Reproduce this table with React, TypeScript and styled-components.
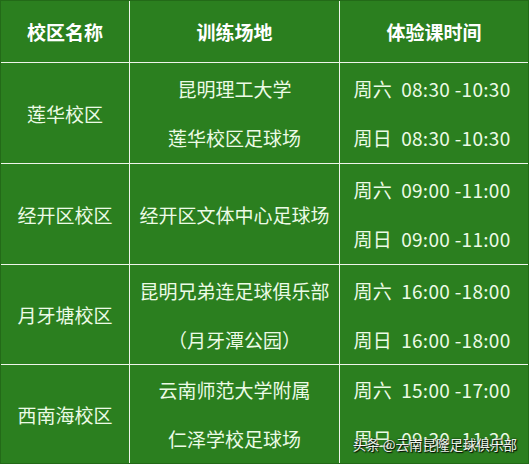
import React from 'react'
import styled, { createGlobalStyle } from 'styled-components'

const GlobalStyle = createGlobalStyle`
  html, body {
    margin: 0;
    padding: 0;
    background: #2b7d1f;
  }
`

const Wrapper = styled.div`
  position: relative;
  width: 529px;
  height: 464px;
  overflow: hidden;
  font-family: 'Noto Sans CJK SC', 'Noto Sans', sans-serif;
`

const Table = styled.div`
  box-sizing: border-box;
  display: grid;
  grid-template-columns: 128px 209px 188px;
  grid-template-rows: 61px 100px 100px 99px 98px;
  gap: 1px;
  width: 529px;
  height: 464px;
  background: #eef5ea;
  border: 1px solid #236a18;
`

const Cell = styled.div<{ $head?: boolean }>`
  background: #2b7f1f;
  color: ${(p) => (p.$head ? '#ffffff' : '#ecfbe6')};
  font-size: 19px;
  font-weight: ${(p) => (p.$head ? 700 : 400)};
  display: flex;
  flex-direction: column;
  align-items: center;
  justify-content: center;
  text-align: center;
  white-space: pre;
`

const Line = styled.div`
  line-height: 49px;
`

const TimeLine = styled(Line)`
  letter-spacing: 0.3px;
  margin-left: -4px;
`

const Watermark = styled.div`
  position: absolute;
  right: 12px;
  bottom: 10px;
  font-size: 13.5px;
  color: #ffffff;
  text-shadow: 0 0 2px #000, 1px 1px 1px #000;
  opacity: 0.9;
  white-space: pre;
`

const rows = [
  { school: '莲华校区', place: ['昆明理工大学', '莲华校区足球场'], time: ['周六  08:30 -10:30', '周日  08:30 -10:30'] },
  { school: '经开区校区', place: ['经开区文体中心足球场'], time: ['周六  09:00 -11:00', '周日  09:00 -11:00'] },
  { school: '月牙塘校区', place: ['昆明兄弟连足球俱乐部', '（月牙潭公园）'], time: ['周六  16:00 -18:00', '周日  16:00 -18:00'] },
  { school: '西南海校区', place: ['云南师范大学附属', '仁泽学校足球场'], time: ['周六  15:00 -17:00', '周日  09:30 -11:30'] },
]

export default function App() {
  return (
    <Wrapper>
      <GlobalStyle />
      <Table>
        <Cell $head>校区名称</Cell>
        <Cell $head>训练场地</Cell>
        <Cell $head>体验课时间</Cell>
        {rows.map((r) => (
          <React.Fragment key={r.school}>
            <Cell>{r.school}</Cell>
            <Cell>
              {r.place.map((p) => (
                <Line key={p}>{p}</Line>
              ))}
            </Cell>
            <Cell>
              {r.time.map((t) => (
                <TimeLine key={t}>{t}</TimeLine>
              ))}
            </Cell>
          </React.Fragment>
        ))}
      </Table>
      <Watermark>头条 @云南昆隆足球俱乐部</Watermark>
    </Wrapper>
  )
}
